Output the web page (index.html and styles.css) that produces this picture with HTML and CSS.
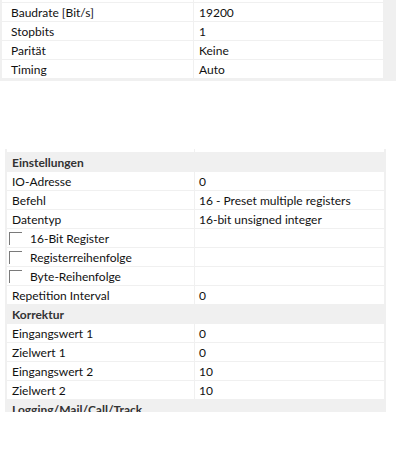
FILE: index.html
```html
<!DOCTYPE html>
<html lang="de">
<head>
<meta charset="utf-8">
<title>Eigenschaften</title>
<link rel="stylesheet" href="styles.css">
</head>
<body>
<div class="panel top-panel">
  <div class="grid top-grid">
    <div class="row"><div class="name"></div><div class="val"></div></div>
    <div class="row"><div class="name">Baudrate [Bit/s]</div><div class="val">19200</div></div>
    <div class="row"><div class="name">Stopbits</div><div class="val">1</div></div>
    <div class="row"><div class="name">Parität</div><div class="val">Keine</div></div>
    <div class="row"><div class="name">Timing</div><div class="val">Auto</div></div>
  </div>
</div>

<div class="panel bottom-panel">
  <div class="grid bottom-grid">
    <div class="row"><div class="name"></div><div class="val"></div></div>
    <div class="row head"><div class="name">Einstellungen</div></div>
    <div class="row"><div class="name">IO-Adresse</div><div class="val">0</div></div>
    <div class="row"><div class="name">Befehl</div><div class="val">16 - Preset multiple registers</div></div>
    <div class="row"><div class="name">Datentyp</div><div class="val">16-bit unsigned integer</div></div>
    <div class="row"><div class="name check"><span class="box"></span>16-Bit Register</div><div class="val"></div></div>
    <div class="row"><div class="name check"><span class="box"></span>Registerreihenfolge</div><div class="val"></div></div>
    <div class="row"><div class="name check"><span class="box"></span>Byte-Reihenfolge</div><div class="val"></div></div>
    <div class="row"><div class="name">Repetition Interval</div><div class="val">0</div></div>
    <div class="row head"><div class="name">Korrektur</div></div>
    <div class="row"><div class="name">Eingangswert 1</div><div class="val">0</div></div>
    <div class="row"><div class="name">Zielwert 1</div><div class="val">0</div></div>
    <div class="row"><div class="name">Eingangswert 2</div><div class="val">10</div></div>
    <div class="row"><div class="name">Zielwert 2</div><div class="val">10</div></div>
    <div class="row head"><div class="name">Logging/Mail/Call/Track</div></div>
  </div>
</div>
</body>
</html>
```

FILE: styles.css
```css
html, body {
  margin: 0;
  padding: 0;
  background: #ffffff;
}

body {
  font-family: "Lato", "Open Sans", sans-serif;
  font-size: 12px;
  color: #111111;
}

.panel {
  background: #f0f0f0;
  overflow: hidden;
}

.top-panel {
  width: 396px;
  height: 81px;
  padding-left: 2px;
  box-sizing: border-box;
}

.top-grid {
  width: 381px;
  margin-top: -16px;
}

.bottom-panel {
  width: 381px;
  height: 263px;
  margin-top: 68px;
  margin-left: 5px;
  padding: 0 2px;
  box-sizing: border-box;
}

.bottom-grid {
  margin-top: -15px;
}

.row {
  display: grid;
  height: 18px;
  border-bottom: 1px solid #f0f0f0;
  background: #ffffff;
  line-height: 16px;
  white-space: nowrap;
  box-sizing: content-box;
}

.top-grid .row {
  grid-template-columns: 192px 1fr;
}

.bottom-grid .row {
  grid-template-columns: 188px 1fr;
}

.name,
.val {
  padding-top: 2px;
  overflow: hidden;
}

.name {
  border-right: 1px solid #f0f0f0;
}

.top-grid .name {
  padding-left: 9px;
}

.bottom-grid .name {
  padding-left: 5px;
}

.val {
  padding-left: 4px;
}

.top-grid .val {
  padding-left: 5px;
}

.row.head {
  background: #f0f0f0;
  grid-template-columns: 1fr;
}

.row.head .name {
  border-right: none;
  font-weight: 700;
  color: #333333;
}

.bottom-grid .name.check {
  display: flex;
  align-items: flex-start;
  padding-left: 2px;
}

.box {
  width: 13px;
  height: 13px;
  margin-top: 1px;
  border-top: 1px solid #7a7a7a;
  border-left: 1px solid #7a7a7a;
  margin-right: 8px;
  box-sizing: border-box;
  flex: none;
}
```
